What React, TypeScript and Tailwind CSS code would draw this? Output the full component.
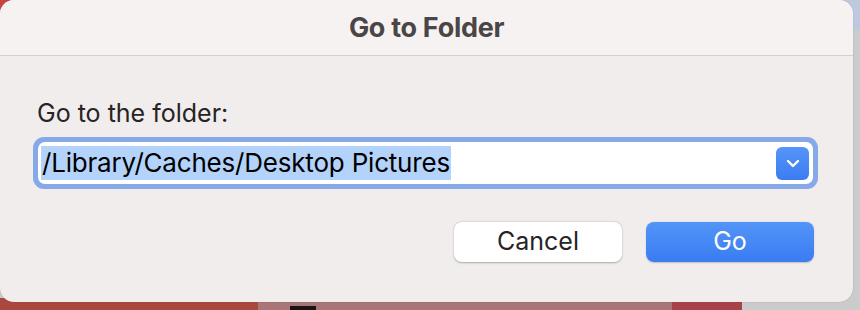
import React from 'react';

const font = { fontFamily: 'Inter, "Noto Sans", sans-serif' };

const Chevron: React.FC = () => (
  <svg width="14" height="9" viewBox="0 0 14 9" fill="none">
    <path d="M2 2l5 5 5-5" stroke="white" strokeWidth="2.4" strokeLinecap="round" strokeLinejoin="round" />
  </svg>
);

const App: React.FC = () => {
  return (
    <div className="relative w-[860px] h-[310px] overflow-hidden bg-[#cbcbcb]" style={font}>
      {/* desktop behind the sheet */}
      <div className="absolute left-0 top-0 w-[40px] h-[40px] bg-[#c4453f]" />
      <div className="absolute right-0 top-0 w-[60px] h-[30px] bg-[#bfc8de]" />
      <div className="absolute left-0 bottom-0 w-[258px] h-[12px] bg-[#a9483f]" />
      <div className="absolute left-[258px] bottom-0 w-[414px] h-[12px] bg-[#a87677]">
        <div className="ml-[32px] mt-[8px] w-[26px] h-[4px] bg-[#1a1414]" />
      </div>
      <div className="absolute left-[672px] bottom-0 w-[70px] h-[12px] bg-[#a8434a]" />

      {/* sheet */}
      <div className="relative w-[853px] h-[302px] rounded-[14px] bg-[#f1edec] overflow-hidden shadow-[0_0_1px_rgba(0,0,0,0.35)]">
        <div className="h-[56px] bg-[#f7f2f2] border-b border-[#d5d0cf] flex items-center justify-center">
          <h1 className="text-[27px] font-bold text-[#4a4646] tracking-[-0.3px] pt-[1px]">Go to Folder</h1>
        </div>

        <div className="pl-[33px] pr-[35px] pt-[43px]">
          <p className="pl-[4px] text-[25px] leading-[28px] text-[#262424] tracking-[0px]">Go to the folder:</p>

          <div className="mt-[10px] h-[52px] rounded-[11px] bg-[#87a9e8] p-[5px]">
            <div className="h-full rounded-[7px] bg-white flex items-center pl-[3px] pr-[4px]">
              <span className="bg-[#b4d3fb] text-[26px] leading-[34px] text-black px-[1px] tracking-[-0.2px]">
                /Library/Caches/Desktop Pictures
              </span>
              <div className="ml-auto w-[33px] h-[33px] rounded-[6px] bg-gradient-to-b from-[#5595f8] to-[#3c7cf1] flex items-center justify-center">
                <Chevron />
              </div>
            </div>
          </div>

          <div className="mt-[33px] flex justify-end gap-[24px] pr-[4px]">
            <button className="w-[168px] h-[40px] rounded-[8px] bg-white text-[25px] text-[#262424] shadow-[0_0.5px_2px_rgba(0,0,0,0.3)]">
              Cancel
            </button>
            <button className="w-[168px] h-[40px] rounded-[8px] bg-gradient-to-b from-[#5394f8] to-[#3a7cf2] text-[25px] text-white shadow-[0_0.5px_1.5px_rgba(0,0,0,0.2)]">
              Go
            </button>
          </div>
        </div>
      </div>
    </div>
  );
};

export default App;
